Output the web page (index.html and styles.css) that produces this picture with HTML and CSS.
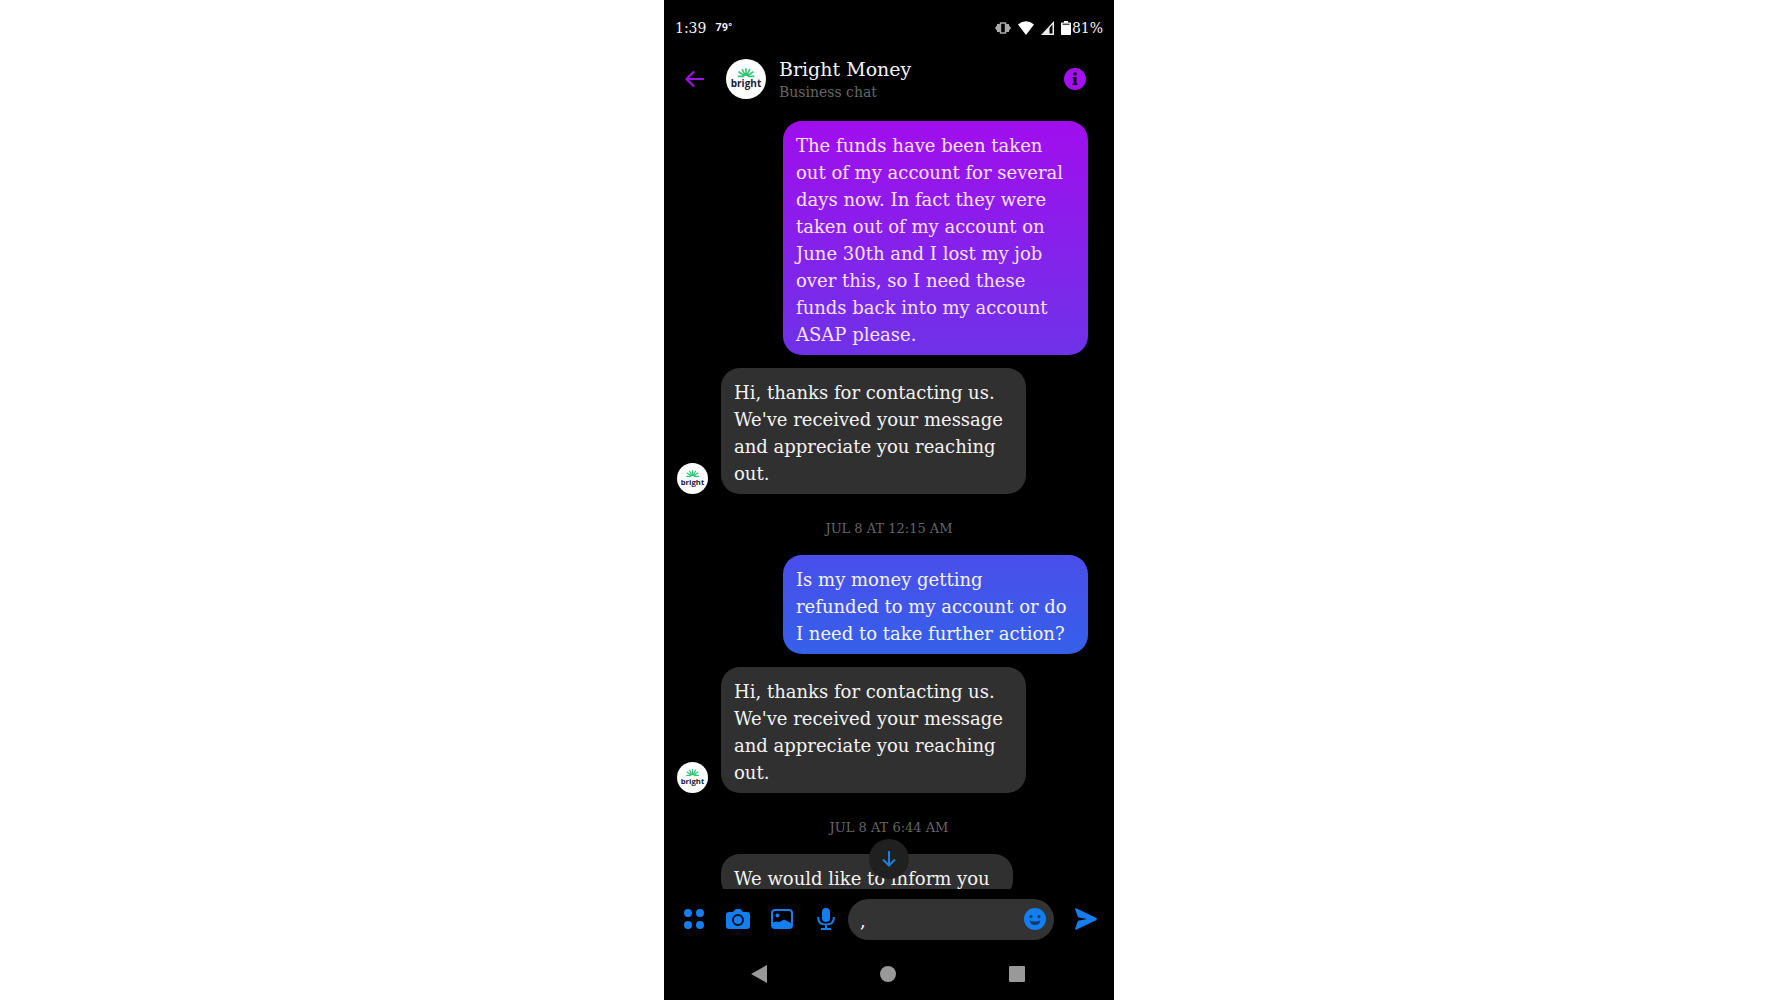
FILE: index.html
```html
<!DOCTYPE html>
<html lang="en">
<head>
<meta charset="utf-8">
<meta name="viewport" content="width=device-width, initial-scale=1">
<title>Bright Money</title>
<link rel="stylesheet" href="styles.css">
</head>
<body>
<main class="phone">
  <div class="status">
    <span class="clock">1:39</span>
    <span class="temp">79°</span>
    <div class="indicators">
      <svg width="16" height="12" viewBox="0 0 16 12"><path d="M0 6l2.500-3.500v7zM16 6l-2.500-3.500v7z" fill="#aaa"/><path d="M2 2h3v8H2zM11 2h3v8h-3z" fill="#aaa"/><rect x="5.500" y="1" width="5" height="10" fill="#000" stroke="#aaa" stroke-width="1.500"/></svg>
      <svg width="16" height="14" viewBox="0 0 16 14"><path d="M0 3.500Q8-3 16 3.500L8 14z" fill="#fff"/></svg>
      <svg width="13" height="14" viewBox="0 0 13 14"><path d="M0 14L13 0v14z" fill="#eee"/><path d="M8.500 7L11.500 3.500v9h-3z" fill="#000"/></svg>
      <div class="battery">
        <svg width="10" height="14" viewBox="0 0 10 14"><path d="M3 0h4v1.500h2.200q.8 0 .8.800v11q0 .7-.8.700H.8q-.8 0-.8-.7v-11q0-.8.800-.8H3z" fill="#fff"/><path d="M1.500 3.200h7" stroke="#000"/></svg>
        <span>81%</span>
      </div>
    </div>
  </div>
  <header class="header">
    <button class="icon-btn" aria-label="Back"><svg width="20" height="18" viewBox="0 0 20 18"><path d="M19 9H2M9 1.500L1.500 9 9 16.500" fill="none" stroke="#9a16e0" stroke-width="2.200"/></svg></button>
    <svg class="avatar" width="40" height="40" viewBox="0 0 40 40">
      <g id="logo">
        <circle cx="20" cy="20" r="20" fill="#fff"/>
        <path d="M12.500 17.400h4.600M23 17.400h4.600M13 13l5 3.400M27 13l-5 3.400M16.200 10.600l2.600 4.800M23.800 10.600l-2.600 4.800M20 9.800V15M17 17.600q3-3.400 6 0" stroke="#2fc774" stroke-width="1.600" stroke-linecap="round" fill="none"/>
        <text x="20" y="28" text-anchor="middle" class="logo-word">bright</text>
      </g>
    </svg>
    <div class="who">
      <h1>Bright Money</h1>
      <p>Business chat</p>
    </div>
    <button class="icon-btn" aria-label="Conversation details"><svg width="22" height="22" viewBox="0 0 22 22"><circle cx="11" cy="11" r="11" fill="#a411f0"/><circle cx="11" cy="6" r="1.800" fill="#12001c"/><path d="M8.500 9h4v6.500h1V17h-5v-1.500h1v-5h-1z" fill="#12001c"/></svg></button>
  </header>
  <section class="chat">
    <div class="messages">
      <p class="bubble sent purple">The funds have been taken<br>out of my account for several<br>days now. In fact they were<br>taken out of my account on<br>June 30th and I lost my job<br>over this, so I need these<br>funds back into my account<br>ASAP please.</p>
      <div class="received">
        <svg class="avatar" width="31" height="31" viewBox="0 0 40 40"><use href="#logo"/></svg>
        <p class="bubble">Hi, thanks for contacting us.<br>We've received your message<br>and appreciate you reaching<br>out.</p>
      </div>
      <time class="stamp">JUL 8 AT 12:15 AM</time>
      <p class="bubble sent blue">Is my money getting<br>refunded to my account or do<br>I need to take further action?</p>
      <div class="received">
        <svg class="avatar" width="31" height="31" viewBox="0 0 40 40"><use href="#logo"/></svg>
        <p class="bubble">Hi, thanks for contacting us.<br>We've received your message<br>and appreciate you reaching<br>out.</p>
      </div>
      <time class="stamp">JUL 8 AT 6:44 AM</time>
      <div class="received partial">
        <p class="bubble">We would like to inform you</p>
      </div>
    </div>
    <button class="jump" aria-label="Jump to latest"><svg width="14" height="16" viewBox="0 0 14 16"><path d="M7 0v14M1 8.500l6 6 6-6" fill="none" stroke="#1b7fe0" stroke-width="2"/></svg></button>
  </section>
  <form class="composer">
    <button type="button" class="icon-btn" aria-label="More"><svg width="20" height="20" viewBox="0 0 20 20" fill="#147ef0"><circle cx="4" cy="4" r="4"/><circle cx="16" cy="4" r="4"/><circle cx="4" cy="16" r="4"/><circle cx="16" cy="16" r="4"/></svg></button>
    <button type="button" class="icon-btn" aria-label="Camera"><svg width="24" height="20" viewBox="0 0 24 20"><path d="M3 3h4l2-2.300Q9.500 0 10.500 0h3q1 0 1.500.7L17 3h4q3 0 3 3v11q0 3-3 3H3q-3 0-3-3V6q0-3 3-3z" fill="#147ef0"/><circle cx="12" cy="11" r="5" fill="#147ef0" stroke="#001226" stroke-width="2"/></svg></button>
    <button type="button" class="icon-btn" aria-label="Gallery"><svg width="22" height="20" viewBox="0 0 22 20"><rect x="1" y="1" width="20" height="18" rx="3" fill="none" stroke="#147ef0" stroke-width="2"/><circle cx="6.500" cy="6.500" r="2" fill="#147ef0"/><path d="M1 14l4.500-1.500 3 .5L13 10.500l8 4V17q0 2-2 2H3q-2 0-2-2z" fill="#147ef0"/></svg></button>
    <button type="button" class="icon-btn" aria-label="Voice message"><svg width="18" height="22" viewBox="0 0 18 22"><rect x="5" y="0" width="8" height="14" rx="4" fill="#147ef0"/><path d="M1.200 9v1q0 6.500 7.800 6.500T16.800 10V9M9 16.500V21M4 21h10" fill="none" stroke="#147ef0" stroke-width="2"/></svg></button>
    <div class="field">
      <input type="text" value="," aria-label="Message">
      <button type="button" class="icon-btn" aria-label="Emoji"><svg width="22" height="22" viewBox="0 0 22 22"><circle cx="11" cy="11" r="11" fill="#147ef0"/><circle cx="7" cy="8.500" r="1.500" fill="#123a68"/><circle cx="15" cy="8.500" r="1.500" fill="#123a68"/><path d="M5.500 12.500q5.500 2 11 0-1 4.500-5.500 4.500t-5.500-4.500z" fill="#123a68"/></svg></button>
    </div>
    <button type="submit" class="icon-btn" aria-label="Send"><svg width="22" height="22" viewBox="0 0 22 22"><path d="M1.200.2L21 9.800q1.800 1.200 0 2.400L1.200 21.800Q-.2 22 .2 20.500L3 12.800 12 11 3 9.200.2 1.500Q-.2 0 1.200.2z" fill="#147ef0"/></svg></button>
  </form>
  <nav class="system">
    <button class="icon-btn" aria-label="System back"><svg width="16" height="18" viewBox="0 0 16 18"><path d="M16 0v18L0 9z" fill="#999"/></svg></button>
    <button class="icon-btn" aria-label="Home"><svg width="16" height="16" viewBox="0 0 16 16"><circle cx="8" cy="8" r="8" fill="#999"/></svg></button>
    <button class="icon-btn" aria-label="Recent apps"><svg width="16" height="16" viewBox="0 0 16 16"><rect width="16" height="16" rx="1" fill="#999"/></svg></button>
  </nav>
</main>
</body>
</html>
```
FILE: styles.css
```css
* { box-sizing: border-box; }
body {
  margin: 0;
  background: #fff;
  font-family: "Roboto Slab", "DejaVu Serif", serif;
}
h1, p { margin: 0; font-weight: 400; }
svg { display: block; flex: none; }
.logo-word { font: 700 10px "Open Sans", sans-serif; fill: #20203a; }

.phone {
  display: flex;
  flex-direction: column;
  max-width: 450px;
  height: 100vh;
  margin: 0 auto;
  background: #000;
  color: #f4f4f4;
}
.icon-btn {
  display: grid;
  place-items: center;
  flex: none;
  width: 24px;
  height: 24px;
  padding: 0;
  border: 0;
  background: none;
}

.status {
  display: flex;
  align-items: center;
  gap: 9px;
  height: 54px;
  padding: 1px 11px 0;
  font-size: 14px;
}
.temp { font: 700 11px "Roboto", sans-serif; }
.indicators { display: flex; align-items: center; gap: 7px; margin-left: auto; }
.battery { display: flex; align-items: center; gap: 1px; }

.header {
  display: flex;
  align-items: center;
  height: 50px;
  padding: 0 27px 0 19px;
}
.header .avatar { margin: 0 13px 0 19px; }
.who { flex: 1; }
.who h1 { font-size: 19px; line-height: 26px; }
.who p { font-size: 14px; line-height: 20px; color: #666; }

.chat {
  position: relative;
  flex: 1;
  min-height: 0;
}
.messages {
  display: flex;
  flex-direction: column;
  gap: 13px;
  height: 100%;
  padding: 17px 26px 0 13px;
  overflow: hidden;
}
.messages > * { flex: none; }
.bubble {
  width: 305px;
  padding: 11px 13px 7px;
  border-radius: 19px;
  background: #303030;
  font-size: 18px;
  line-height: 27px;
  white-space: nowrap;
}
.sent { align-self: flex-end; }
.purple { background: linear-gradient(#a10eee, #6e32e8); color: #f9e2ff; }
.blue { background: linear-gradient(#4a4eea, #3560ea); }
.received { display: flex; align-items: flex-end; gap: 13px; }
.partial { padding-left: 44px; }
.partial .bubble { width: 292px; }
.stamp {
  padding: 8px 0 0 13px;
  font-size: 13px;
  line-height: 27px;
  text-align: center;
  color: #666;
}
.jump {
  position: absolute;
  left: 50%;
  bottom: 10px;
  display: grid;
  place-items: center;
  width: 40px;
  height: 40px;
  margin-left: -20px;
  padding: 0;
  border: 0;
  border-radius: 50%;
  background: #202020;
}

.composer {
  display: flex;
  align-items: center;
  gap: 20px;
  height: 60px;
  padding: 0 16px 0 18px;
}
.field {
  display: flex;
  align-items: center;
  flex: 1;
  min-width: 0;
  height: 41px;
  margin-left: -10px;
  padding: 0 7px 0 12px;
  border-radius: 21px;
  background: #333;
}
.field input {
  flex: 1;
  min-width: 0;
  padding: 2px 0 0;
  border: 0;
  outline: 0;
  background: none;
  color: #fff;
  font: 18px "Roboto Slab", "DejaVu Serif", serif;
}

.system {
  display: flex;
  align-items: center;
  justify-content: space-between;
  height: 51px;
  padding: 0 85px 2px 83px;
}
```
